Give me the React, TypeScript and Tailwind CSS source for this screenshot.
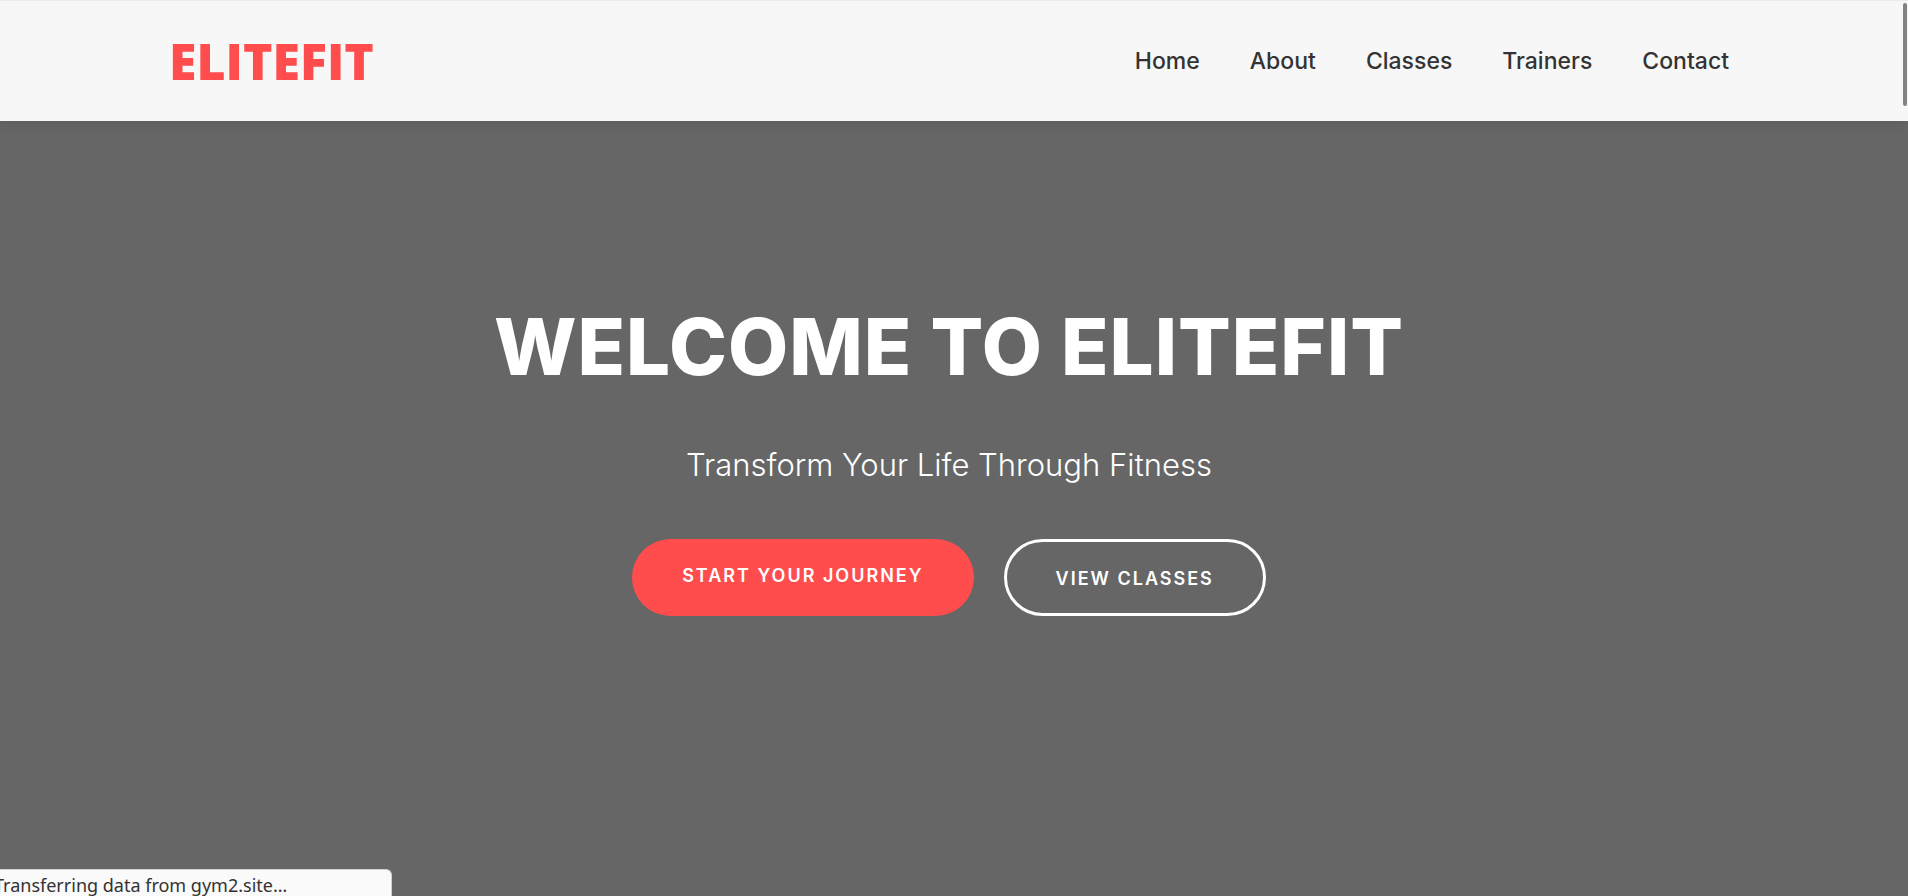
const links = ["Home", "About", "Classes", "Trainers", "Contact"];

function Header() {
  return (
    <header className="relative border-t border-[#ececec] bg-[#f7f7f7] pr-[10px] shadow-[0_2px_12px_rgba(0,0,0,0.1)]">
      <div className="mx-auto flex h-[120px] max-w-[1560px] items-center justify-between">
        <a
          href="#home"
          className="font-['Open_Sans',sans-serif] text-[50px] leading-[58px] font-extrabold text-[#ff4d4d]"
        >
          ELITEFIT
        </a>
        <nav aria-label="Main">
          <ul className="flex gap-[50px]">
            {links.map((name) => (
              <li key={name}>
                <a href={`#${name.toLowerCase()}`} className="text-[23px] leading-[34px] font-medium text-[#333333]">
                  {name}
                </a>
              </li>
            ))}
          </ul>
        </nav>
      </div>
    </header>
  );
}

function Hero() {
  return (
    <main className="flex flex-1 flex-col items-center pt-[166px] pr-[10px] text-center text-white">
      <h1 className="text-[78px] leading-[120px] font-extrabold tracking-[1px]">WELCOME TO ELITEFIT</h1>
      <p className="mt-[35px] text-[31px] leading-[46px] font-light">Transform Your Life Through Fitness</p>
      <div className="mt-[51px] flex gap-[30px]">
        <a
          href="#join"
          className="rounded-full bg-[#ff4d4d] px-[50px] pt-[21px] pb-[24px] text-[18px] leading-8 font-semibold tracking-[2px]"
        >
          START YOUR JOURNEY
        </a>
        <a
          href="#classes"
          className="rounded-full border-[3px] border-white px-[49px] pt-[21px] pb-[18px] text-[18px] leading-8 font-semibold tracking-[2px]"
        >
          VIEW CLASSES
        </a>
      </div>
    </main>
  );
}

export default function App() {
  return (
    <div className="flex min-h-screen flex-col bg-[#666666] font-['Inter',sans-serif]">
      <Header />
      <Hero />
      <div className="fixed top-[3px] right-px h-[103px] w-1 rounded-full bg-[#7f8483]" />
      <div
        role="status"
        className="fixed bottom-0 left-0 h-[27px] w-[392px] overflow-hidden rounded-tr-md border-t border-r border-[#d0d0d0] bg-[#fafafa] font-['Noto_Sans',sans-serif] text-[18px] leading-[30px] text-[#333333]"
      >
        <span className="-ml-1.5 whitespace-nowrap">Transferring data from gym2.site…</span>
      </div>
    </div>
  );
}
